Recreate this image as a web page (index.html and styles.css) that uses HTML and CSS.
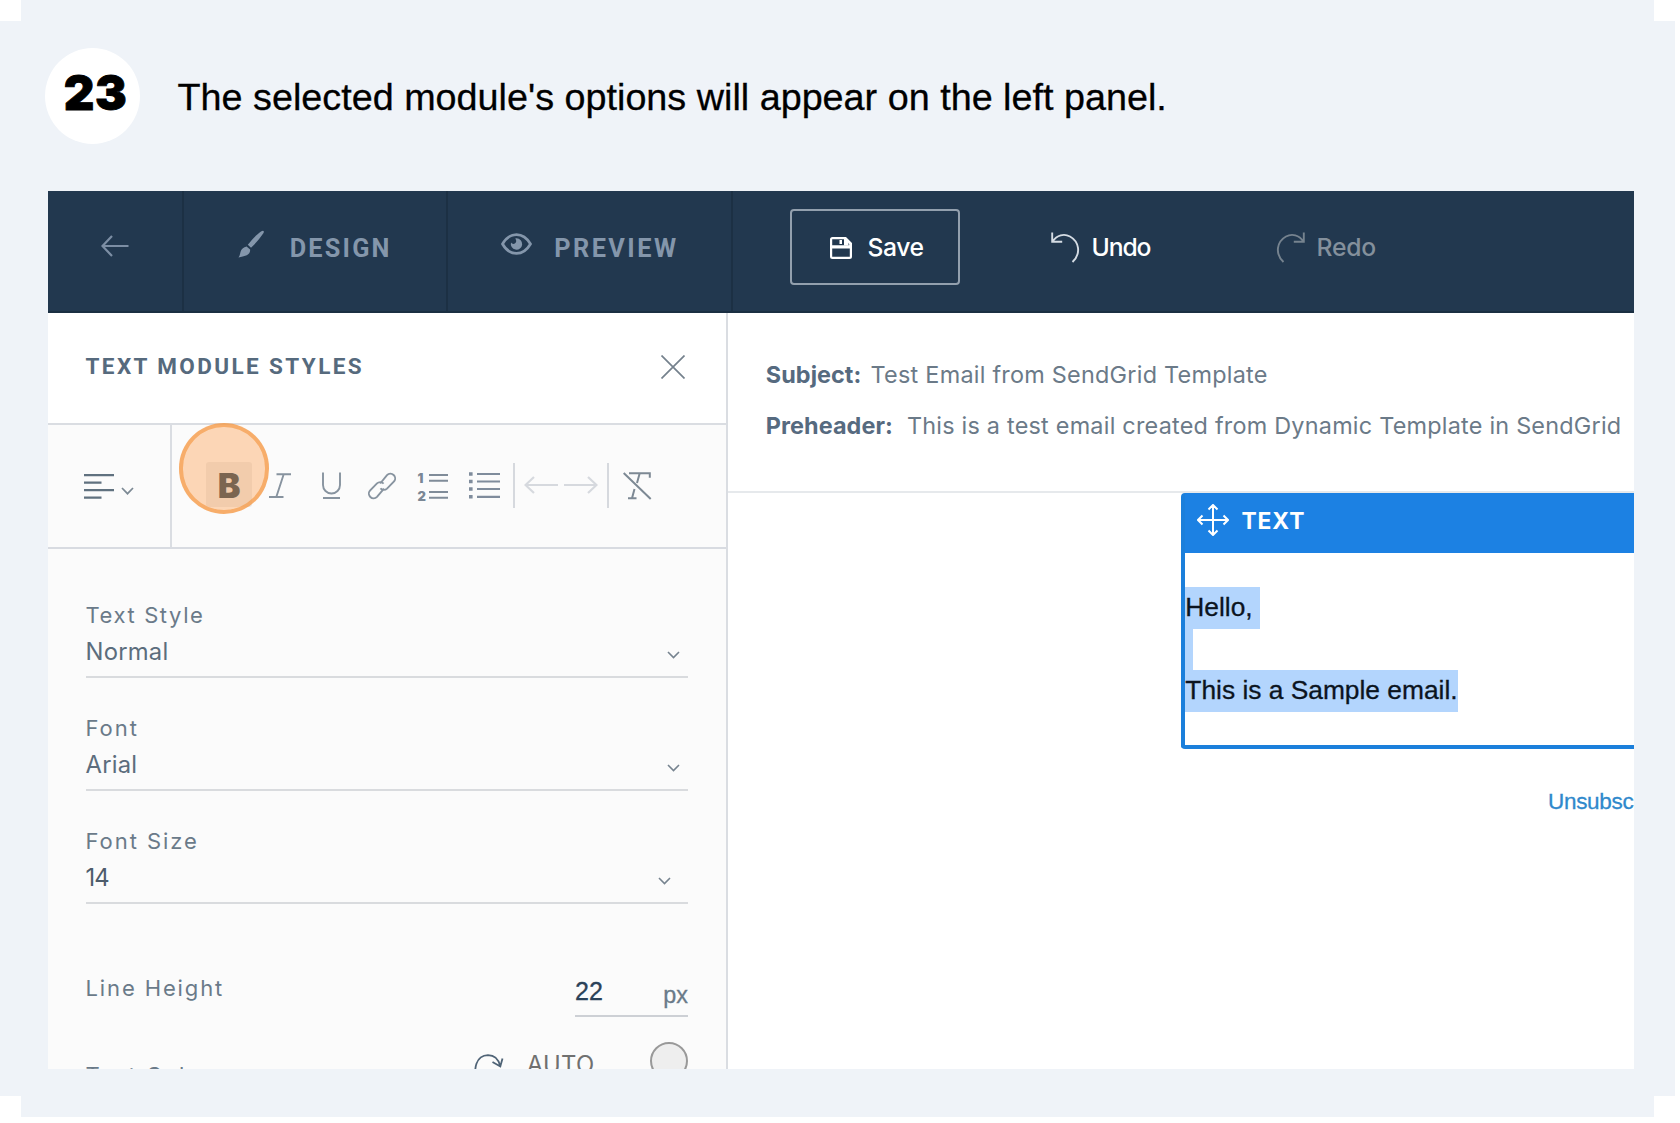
FILE: index.html
```html
<!DOCTYPE html>
<html lang="en">
<head>
<meta charset="utf-8">
<title>Step 23</title>
<link rel="stylesheet" href="styles.css">
</head>
<body>
<main class="step">
  <header class="step-head">
    <div class="step-number">23</div>
    <h1 class="step-title">The selected module's options will appear on the left panel.</h1>
  </header>

  <section class="editor">
    <nav class="topbar">
      <div class="tab tab-back">
        <svg width="28" height="22" viewBox="0 0 28 22" fill="none" stroke="#7c8ea4" stroke-width="2.2"><path d="M27.5 11H1.5M11 1L1.5 11l9.5 10"/></svg>
      </div>
      <div class="tab tab-design">
        <svg width="27" height="28" viewBox="0 0 27 28" fill="#8496ab"><path d="M25.3.9c.8.3.7 1.3.2 2.200-3 4.700-7.300 9.700-12.500 14.600l-3.200-2.900C14 9.500 19 4.300 23 1.600c1-.6 1.700-.9 2.300-.7zM8.600 16.400l3.500 3.200c.3 2.500-1 4.700-3.300 5.600-2.600 1-5.500 1.800-8.300 2.400 1.300-1.900 1.500-3.500 2-5.600.6-2.800 3-5.200 6.100-5.600z"/></svg>
        <span>DESIGN</span>
      </div>
      <div class="tab tab-preview">
        <svg width="31" height="22" viewBox="0 0 31 22"><path d="M1.500 11C5 5 10 1.600 15.500 1.600S26 5 29.500 11C26 17 21 20.400 15.500 20.400S5 17 1.500 11z" fill="none" stroke="#8496ab" stroke-width="2.700"/><path d="M15.500 5.300a5.700 5.700 0 1 1-5.500 4.200c.8 1.300 2.500 1.800 3.800 1 1.400-.8 1.800-2.500 1.100-3.800-.2-.5-.4-.8-.6-1.100.3-.2.8-.3 1.200-.3z" fill="#8496ab"/></svg>
        <span>PREVIEW</span>
      </div>
      <div class="actions">
        <button class="action save">
          <svg width="22" height="22" viewBox="0 0 22 22"><path fill="#fff" fill-rule="evenodd" d="M2.500 0H16l6 6v13.500a2.500 2.500 0 0 1-2.500 2.500h-17A2.500 2.500 0 0 1 0 19.500v-17A2.500 2.500 0 0 1 2.500 0zM2.200 2.300v6h17V7L15 2.300zM2.200 11.500v8.200h17.600v-8.200z"/><path fill="#fff" d="M9.500 3h2.500v4H9.500zM14 2h2l2.500 3v3.500H14z"/></svg>
          <span>Save</span>
        </button>
        <button class="action undo">
          <svg width="29" height="31" viewBox="0 0 29 31" fill="none" stroke="#d5dce4" stroke-width="1.9"><path d="M1.200.5v9.300h10M1.500 9.500C6 3 13 1.200 19 4.500c9 5 11.500 17 2.500 25.500"/></svg>
          <span>Undo</span>
        </button>
        <button class="action redo">
          <svg width="29" height="31" viewBox="0 0 29 31" fill="none" stroke="#76838f" stroke-width="1.9"><path d="M27.800.5v9.300h-10M27.500 9.500C23 3 16 1.200 10 4.500c-9 5-11.500 17-2.500 25.500"/></svg>
          <span>Redo</span>
        </button>
      </div>
    </nav>

    <div class="workspace">
      <aside class="panel">
        <div class="panel-head">
          <h2>TEXT MODULE STYLES</h2>
          <svg width="24" height="24" viewBox="0 0 24 24" stroke="#75818d" stroke-width="1.7"><path d="M.5.5l23 23M23.500.5l-23 23"/></svg>
        </div>

        <div class="toolbar">
          <div class="align">
            <svg width="30" height="25" viewBox="0 0 30 25" stroke="#60717f" stroke-width="2.2"><path d="M0 1.200h30M0 8.700h17.500M0 16.200h30M0 23.700h17.500"/></svg>
            <svg class="align-caret" width="13" height="8" viewBox="0 0 13 8" fill="none" stroke="#7c8994" stroke-width="1.7"><path d="M1 1l5.500 5.700L12 1"/></svg>
          </div>
          <div class="tools">
            <span class="bold">B<i class="click-mark"></i></span>
            <svg class="t-italic" width="22" height="28" viewBox="0 0 22 28" fill="none" stroke="#87939f" stroke-width="1.9"><path d="M7.500 2.200H22M0 25H14.500M14.700 2.200L7.300 25"/></svg>
            <svg class="t-under" width="19" height="28" viewBox="0 0 19 28" fill="none" stroke="#87939f" stroke-width="1.9"><path d="M1 .5V13a8.500 8.500 0 0 0 17 0V.5M1 26h17"/></svg>
            <svg class="t-link" width="28" height="28" viewBox="0 0 28 28" fill="none" stroke="#87939f" stroke-width="1.9"><path d="M12.200 11.500L19 3.200a4.700 4.700 0 0 1 6.800 6.500L19 16.600a4.600 4.600 0 0 1-6.600-.2M16 16.700L9 24.800a4.700 4.700 0 0 1-6.800-6.500L9 11.400a4.600 4.600 0 0 1 6.600.2"/></svg>
            <div class="t-ol">
              <div class="ol-digits"><b>1</b><b>2</b></div>
              <svg width="19" height="28" viewBox="0 0 19 28" stroke="#808c99" stroke-width="2"><path d="M0 3h19M0 8.700h19M0 20h19M0 25.700h19"/></svg>
            </div>
            <svg class="t-ul" width="31" height="28" viewBox="0 0 31 28" stroke="#7f8c9c" stroke-width="2.2"><path d="M8 2h23M8 9.500h23M8 17h23M8 24.800h23"/><path stroke-width="3.600" d="M0 2h3.600M0 9.500h3.600M0 17h3.600M0 24.800h3.600"/></svg>
            <span class="rule"></span>
            <svg class="t-left" width="34" height="18" viewBox="0 0 34 18" fill="none" stroke="#d6d9de" stroke-width="2.2"><path d="M34 9H1.500M10 1L1.500 9l8.500 8"/></svg>
            <svg class="t-right" width="34" height="18" viewBox="0 0 34 18" fill="none" stroke="#d6d9de" stroke-width="2.2"><path d="M0 9h32.500M24 1l8.500 8-8.500 8"/></svg>
            <span class="rule rule-end"></span>
            <svg class="t-clear" width="29" height="28" viewBox="0 0 29 28" fill="none" stroke="#7d8994" stroke-width="2"><path d="M.7 1l27 26M6 1.200h20.800v4.500M16.500 2L14 11M11.500 17L9 26.300M5 26.300h8.500"/></svg>
          </div>
        </div>

        <div class="settings">
          <div class="field">
            <label class="tight">Text Style</label>
            <div class="value"><span>Normal</span><svg width="13" height="8" viewBox="0 0 13 8"><path d="M1 1l5.500 5.500L12 1"/></svg></div>
          </div>
          <div class="field">
            <label>Font</label>
            <div class="value"><span>Arial</span><svg width="13" height="8" viewBox="0 0 13 8"><path d="M1 1l5.500 5.500L12 1"/></svg></div>
          </div>
          <div class="field field-size">
            <label>Font Size</label>
            <div class="value"><span>14</span><svg width="13" height="8" viewBox="0 0 13 8"><path d="M1 1l5.500 5.500L12 1"/></svg></div>
          </div>
          <div class="line-height">
            <label>Line Height</label>
            <div class="number"><span>22</span><small>px</small></div>
          </div>
          <div class="color-row">
            <label>Text Color</label>
            <svg class="reset" width="30" height="30" viewBox="0 0 30 30" fill="none" stroke="#4f6376" stroke-width="1.8"><path d="M4 24.500C-1.500 16 2 1.500 14 1.200c6 0 10.500 4 12.300 11M18.500 8l7.800 4.500L28.500 4.500"/></svg>
            <span class="auto">AUTO</span>
            <span class="swatch"></span>
          </div>
        </div>
      </aside>

      <section class="canvas">
        <div class="meta">
          <p><b>Subject:</b><span>Test Email from SendGrid Template</span></p>
          <p class="preheader"><b>Preheader:</b><span>This is a test email created from Dynamic Template in SendGrid</span></p>
        </div>
        <div class="module">
          <div class="module-head">
            <svg width="32" height="32" viewBox="0 0 32 32" fill="none" stroke="#fff" stroke-width="2"><path d="M16 1v30M1 16h30M11.500 5.500L16 1l4.500 4.500M11.500 26.500L16 31l4.500-4.500M5.500 11.500L1 16l4.500 4.500M26.500 11.500L31 16l-4.500 4.500"/></svg>
            <span>TEXT</span>
          </div>
          <div class="module-body">
            <div class="sel sel-hello">Hello,</div>
            <div class="sel sel-blank"></div>
            <div class="sel sel-text">This is a Sample email.</div>
          </div>
        </div>
        <a class="unsubscribe">Unsubscribe</a>
      </section>
    </div>
  </section>
</main>
</body>
</html>
```
FILE: styles.css
```css
* { box-sizing: border-box; }
body { margin: 0; background: #fff; overflow: hidden; font-family: Inter, "Liberation Sans", sans-serif; }
svg { display: block; flex: none; }
h1, h2, p { margin: 0; font-weight: 400; }

.step {
  width: 1675px;
  height: 1117px;
  padding-left: 48px;
  background: #eff3f8;
  clip-path: polygon(21px 0, 1654px 0, 1654px 21px, 100% 21px, 100% 1096px, 1654px 1096px, 1654px 100%, 21px 100%, 21px 1096px, 0 1096px, 0 21px, 21px 21px);
}
.step-head { display: flex; align-items: flex-start; height: 191.3px; padding-top: 48px; }
.step-number {
  width: 95px; height: 96px; margin-left: -3px; padding-left: 6px;
  border-radius: 50%; background: #fff;
  font: 900 47.5px/90px Inter, sans-serif; text-align: center; letter-spacing: 0.6px;
  -webkit-text-stroke: 0.8px #000;
}
.step-title { margin: 17px 0 0 37.5px; font: 400 37.75px/64px "Liberation Sans", Arial, sans-serif; color: #000; white-space: nowrap; -webkit-text-stroke: 0.3px #000; }

.editor { width: 1586px; height: 877.5px; overflow: hidden; background: #fff; }

.topbar { display: flex; height: 122px; background: #22384f; border-bottom: 2px solid #1b2f42; }
.tab { display: flex; border-right: 2px solid #1c3044; font: 700 25.3px/40px Roboto, sans-serif; letter-spacing: 2.48px; color: #8496ab; }
.tab span { margin-top: 38px; }
.tab-back { width: 136px; padding: 43.7px 0 0 53px; }
.tab-design { width: 263.5px; padding-left: 54px; letter-spacing: 2.2px; }
.tab-design svg { margin: 39px 24.7px 0 0; }
.tab-preview { width: 285.5px; padding-left: 53px; }
.tab-preview svg { margin: 42px 22.7px 0 0; }
.actions { display: flex; padding: 17.5px 0 0 57px; }
.action {
  display: flex; height: 76px; padding: 0; border: 0; background: none;
  font: 500 24.7px/40px Inter, sans-serif; letter-spacing: -0.5px; color: #fff; text-align: left;
}
.action span { margin-top: 18px; }
.save { width: 170px; padding-left: 37.5px; border: 2px solid #93a0ae; border-radius: 4px; letter-spacing: -0.4px; }
.save svg { margin: 26px 16px 0 0; }
.save span { margin-top: 16px; }
.undo { width: 134px; margin-left: 91px; letter-spacing: -1.1px; }
.undo svg, .redo svg { margin: 23.5px 11.5px 0 0; }
.redo { margin-left: 91px; letter-spacing: -0.2px; color: #84909c; }

.workspace { display: flex; height: 756px; }
.panel { flex: none; width: 680px; border-right: 2px solid #dadde2; background: #fbfbfb; }
.panel-head { display: flex; justify-content: space-between; height: 111.5px; padding: 41.5px 41.5px 0 37.5px; border-bottom: 2px solid #dadde2; background: #fff; }
.panel-head h2 { margin-top: -4.6px; font: 700 22.5px/32px Roboto, sans-serif; letter-spacing: 2.39px; color: #566a7d; }

.toolbar { display: flex; height: 124px; border-bottom: 2px solid #d8dbe1; }
.align { display: flex; width: 124.2px; padding: 49.5px 0 0 35.7px; border-right: 2px solid #dadde2; }
.align-caret { margin: 13px 0 0 7.5px; }
.tools { display: flex; padding-top: 47.3px; }
.bold {
  position: relative; width: 46px; height: 45px; margin: -9.8px 0 0 34px;
  border-radius: 3px; background: #e9e9e9;
  font: 900 34px/47px Inter, sans-serif; text-align: center; color: #233e50;
}
.click-mark {
  position: absolute; left: -27.3px; top: -39px; width: 90.5px; height: 90.5px;
  border: 4px solid rgba(245, 150, 65, .65); border-radius: 50%; background: rgba(255, 160, 80, .4);
}
.t-italic { margin-left: 16.7px; }
.t-under { margin-left: 31px; }
.t-link { margin-left: 27.5px; }
.t-ol { display: flex; margin-left: 21px; }
.ol-digits { display: flex; flex-direction: column; width: 11.5px; font: 800 13px/17.5px Inter, sans-serif; color: #7a8795; margin-top: -1.8px; }
.t-ul { margin-left: 20.7px; }
.rule { width: 2px; height: 45px; margin: -9px 9px 0 13px; background: #d6d9de; }
.t-left, .t-right { margin-top: 4px; }
.t-right { margin-left: 6.3px; }
.rule-end { margin: -9px 14.5px 0 9px; }
.t-clear { margin-top: -0.5px; }

.settings { padding: 51.3px 38px 0 37.5px; }
label { display: block; font-size: 22px; line-height: 30px; letter-spacing: 1.95px; color: #6a7a89; }
label.tight { letter-spacing: 1.6px; }
.field { height: 78px; margin-bottom: 35px; border-bottom: 2px solid #d9dbde; }
.value { display: flex; align-items: center; justify-content: space-between; margin-top: 5px; padding-right: 8px; font-size: 23.8px; line-height: 34px; letter-spacing: 0.25px; color: #5c6d7d; }
.value svg { margin-top: 6px; fill: none; stroke: #76838f; stroke-width: 1.6; }
.field-size .value { padding-right: 17.5px; letter-spacing: -1px; color: #4d5c6b; }
.line-height { display: flex; justify-content: space-between; margin-top: 69.3px; height: 43.5px; }
.line-height label { letter-spacing: 1.88px; }
.number { display: flex; justify-content: space-between; width: 113px; border-bottom: 2px solid #cdd0d5; font: 25.1px/37px "Liberation Sans", Arial, sans-serif; color: #2b4259; -webkit-text-stroke: 0.3px; }
.number small { font: 23.4px/44px "Liberation Sans", Arial, sans-serif; color: #6a7a89; }
.color-row { display: flex; margin-top: 25px; }
.color-row label { width: 388.5px; padding-top: 18.6px; }
.reset { margin-top: 12px; }
.auto { width: 121px; padding: 7px 0 0 22.8px; font-size: 23.8px; line-height: 32px; letter-spacing: 0.3px; color: #707070; }
.swatch { flex: none; width: 38px; height: 38px; margin-left: auto; border: 2px solid #999; border-radius: 50%; background: #eee; }

.canvas { flex: 1; min-width: 0; display: flex; flex-direction: column; }
.meta { height: 179.5px; padding: 45.6px 0 0 37.8px; border-bottom: 2px solid #e6e9ec; font-size: 23.4px; line-height: 32px; letter-spacing: 0.25px; color: #6b7a88; white-space: nowrap; }
.meta b { margin-right: 9.2px; letter-spacing: 0.07px; color: #566a7f; }
.preheader { margin-top: 18.8px; }
.preheader b { margin-right: 14px; }
.preheader span { letter-spacing: 0.23px; }
.module { width: 600px; height: 256.5px; margin-left: 453.3px; border: 4px solid #1b7fdb; border-top: 0; border-radius: 4px; font-family: "Liberation Sans", Arial, sans-serif; }
.module-head { display: flex; height: 60px; padding: 11.5px 0 0 12.2px; background: #1c81e3; font: 700 22.8px/33px Inter, sans-serif; letter-spacing: 0.9px; color: #fff; }
.module-head span { margin-left: 12px; }
.module-body { padding-top: 34.3px; font-size: 26.35px; color: #0b1420; -webkit-text-stroke: 0.3px; }
.sel { height: 41.7px; line-height: 41.7px; background: #b3d5fd; white-space: nowrap; }
.sel-hello { width: 74.5px; }
.sel-blank { width: 7.5px; }
.sel-text { width: 273px; }
.unsubscribe { margin: 36.7px 0 0 820px; font: 22.5px/32px "Liberation Sans", Arial, sans-serif; letter-spacing: -0.3px; color: #2f89cc; white-space: nowrap; -webkit-text-stroke: 0.3px; }
```
